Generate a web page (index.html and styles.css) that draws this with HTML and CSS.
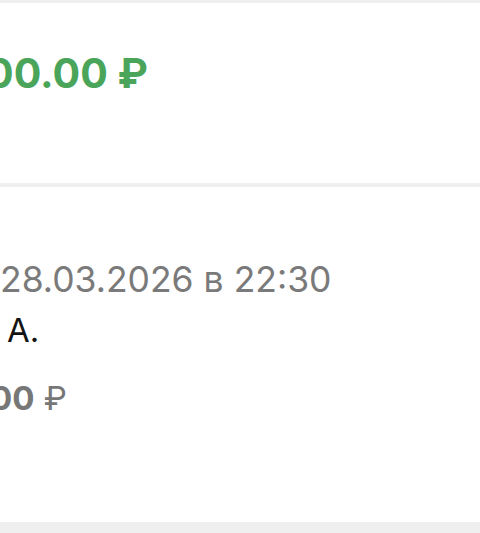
FILE: index.html
```html
<!DOCTYPE html>
<html lang="ru">
<head>
  <meta charset="UTF-8">
  <meta name="viewport" content="width=device-width, initial-scale=1.0">
  <title>Платёж</title>
  <link rel="stylesheet" href="styles.css">
</head>
<body>
  <div class="card total">
    <div class="sum">00.00 ₽</div>
  </div>

  <div class="card payment">
    <div class="date">28.03.2026 в 22:30</div>
    <div class="name">А.</div>
    <div class="amount"><b>00</b> ₽</div>
  </div>
</body>
</html>
```

FILE: styles.css
```css
html, body {
  margin: 0;
  padding: 0;
}
body {
  font-family: Inter, "Noto Sans", sans-serif;
  background: #efefef;
  padding-top: 3px;
  overflow: hidden;
}
.card {
  background: white;
  overflow: hidden;
  white-space: nowrap;
}
.total {
  height: 180px;
  box-sizing: border-box;
  padding-top: 46px;
  margin-bottom: 4px;
}
.sum {
  font-size: 41px;
  line-height: 49px;
  font-weight: 700;
  color: #4aa55a;
  text-indent: -14px;
}
.payment {
  height: 335px;
  box-sizing: border-box;
  padding-top: 71px;
}
.date {
  font-size: 35.5px;
  line-height: 44px;
  color: #7a7a7a;
  margin-bottom: 8px;
}
.name {
  font-size: 33px;
  line-height: 40px;
  color: #141414;
  padding-left: 7px;
  margin-bottom: 28px;
}
.amount {
  font-size: 33px;
  line-height: 40px;
  color: #777;
  text-indent: -10px;
}
.amount b {
  font-weight: 700;
}
```
